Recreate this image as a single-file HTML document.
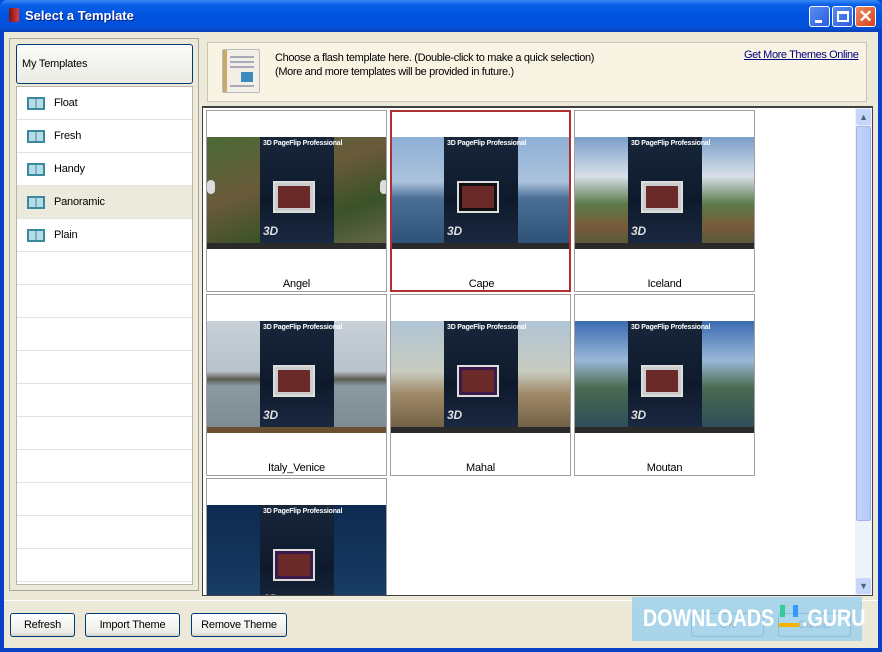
<!DOCTYPE html>
<html><head><meta charset="utf-8"><style>
*{box-sizing:border-box;margin:0;padding:0}
body{width:882px;height:652px;overflow:hidden;font-family:Tahoma,"Liberation Sans",sans-serif;font-size:11px;letter-spacing:-0.2px;color:#000;background:#0a46d8;position:relative}
.abs{position:absolute}
#title{left:0;top:0;width:882px;height:32px;background:linear-gradient(#3a8cf6 0,#0a5fe6 15%,#0053e1 50%,#0450d8 85%,#0a3fb8 100%);border-radius:7px 7px 0 0}
#title .t{left:25px;top:8px;color:#fff;font-weight:bold;font-size:13px;letter-spacing:0;text-shadow:1px 1px #0a1e80}
.tb{top:6px;width:21px;height:21px;border:1px solid #fff;border-radius:3px;background:linear-gradient(135deg,#5a8cf0,#2a5ee0)}
#body{left:4px;top:32px;width:874px;height:616px;background:#ece9d8}
.btn{height:24px;border:1px solid #003c74;border-radius:3px;background:linear-gradient(#fff,#ecebe6 85%,#d6d0c5);text-align:center;line-height:22px;font-size:11px}
.row{left:17px;width:175px;height:33px;border-bottom:1px solid #e4e2da}
.row .ic{position:absolute;left:10px;top:10px;width:18px;height:13px;border:2px solid #3a8a9e;background:linear-gradient(90deg,#b7dce8 45%,#3a8a9e 45%,#3a8a9e 55%,#b7dce8 55%)}
.row span{position:absolute;left:37px;top:10px}
.cell{width:181px;height:182px;border:1px solid #a0a0a0;background:#fff;overflow:hidden}
.cell .img{position:absolute;left:0;top:26px;width:179px;height:112px}
.cell .cv{position:absolute;left:53px;top:26px;width:74px;height:106px;background:linear-gradient(#18263a,#0e1a2c 60%,#1a2840)}
.cv b{position:absolute;left:3px;top:3px;color:#fff;font-size:7px;font-weight:bold;white-space:nowrap}
.cv i{position:absolute;left:13px;top:44px;width:42px;height:32px;background:#ccc;border:2px solid #ddd}
.cv i:after{content:"";position:absolute;left:3px;top:3px;width:32px;height:22px;background:#6a2a2a}
.cv u{position:absolute;left:3px;bottom:5px;color:#ddd;font-size:12px;font-weight:bold;text-decoration:none;font-style:italic}
.cell .bar{position:absolute;left:0;top:132px;width:179px;height:6px;background:#2a2a2a}
.cell .lb{position:absolute;left:0;width:179px;top:167px;text-align:center;font-size:11px}
.cell .nav{position:absolute;top:69px;width:8px;height:14px;background:#ddd;border-radius:7px}
.wm{color:#fff;font-size:24px;font-weight:bold;font-family:'Liberation Sans',sans-serif;letter-spacing:0;transform-origin:0 0;transform:scaleX(0.82)}
</style></head><body>
<div class="abs" id="title">
 <div class="abs" style="left:9px;top:8px;width:10px;height:14px;background:linear-gradient(90deg,#7a1010,#e04040);border-radius:2px"></div>
 <div class="abs t">Select a Template</div>
 <div class="abs tb" style="left:809px"><div class="abs" style="left:5px;top:13px;width:7px;height:3px;background:#fff"></div></div>
 <div class="abs tb" style="left:832px"><div class="abs" style="left:4px;top:4px;width:12px;height:11px;border:2px solid #fff;border-top-width:3px"></div></div>
 <div class="abs tb" style="left:855px;background:linear-gradient(135deg,#f08a60,#d6401a);color:#fff;font-size:17px;text-align:center;line-height:19px;font-weight:bold">✕</div>
</div>
<div class="abs" style="left:0;top:32px;width:882px;height:620px;background:#0841c8"></div>
<div class="abs" id="body"></div>

<div class="abs" style="left:9px;top:38px;width:190px;height:553px;border:1px solid #a8a59a;background:#ece9d8"></div>
<div class="abs btn" style="left:16px;top:44px;width:177px;height:40px;line-height:38px;text-align:left;padding-left:5px;background:linear-gradient(#fbfbf8,#ecebe4)">My Templates</div>
<div class="abs" style="left:16px;top:86px;width:177px;height:499px;background:#fff;border:1px solid #b8b4a8"></div>
<div class="abs row" style="top:87px"><div class="ic"></div><span>Float</span></div>
<div class="abs row" style="top:120px"><div class="ic"></div><span>Fresh</span></div>
<div class="abs row" style="top:153px"><div class="ic"></div><span>Handy</span></div>
<div class="abs row" style="top:186px;background:#ece9dd"><div class="ic"></div><span>Panoramic</span></div>
<div class="abs row" style="top:219px"><div class="ic"></div><span>Plain</span></div>
<div class="abs row" style="top:252px"></div><div class="abs row" style="top:285px"></div><div class="abs row" style="top:318px"></div><div class="abs row" style="top:351px"></div><div class="abs row" style="top:384px"></div><div class="abs row" style="top:417px"></div><div class="abs row" style="top:450px"></div><div class="abs row" style="top:483px"></div><div class="abs row" style="top:516px"></div><div class="abs row" style="top:549px"></div>

<div class="abs" style="left:207px;top:42px;width:660px;height:60px;background:#f8f3e3;border:1px solid #c8c4b8"></div>
<div class="abs" style="left:222px;top:49px;width:38px;height:44px;background:linear-gradient(90deg,#c9a86a 0,#c9a86a 4px,#f2efe6 4px);border:1px solid #bbb;border-radius:2px">
 <div class="abs" style="left:18px;top:22px;width:12px;height:10px;background:#3a8ac0"></div>
 <div class="abs" style="left:7px;top:6px;width:24px;height:2px;background:#aab"></div><div class="abs" style="left:7px;top:11px;width:24px;height:2px;background:#aab"></div><div class="abs" style="left:7px;top:16px;width:24px;height:2px;background:#aab"></div><div class="abs" style="left:7px;top:35px;width:24px;height:2px;background:#aab"></div>
</div>
<div class="abs" style="left:275px;top:51px;line-height:14px;letter-spacing:-0.35px">Choose a flash template here. (Double-click to make a quick selection)<br>(More and more templates will be provided in future.)</div>
<div class="abs" style="left:744px;top:49px;color:#000080;text-decoration:underline;letter-spacing:-0.4px">Get More Themes Online</div>

<div class="abs" style="left:202px;top:106px;width:671px;height:490px;background:#fff;border:1px solid #404040;border-top:2px solid #404040;overflow:hidden">
 <div class="abs" style="left:652px;top:0;width:17px;height:487px;background:#eef2fb">
  <div class="abs" style="left:1px;top:1px;width:15px;height:16px;background:#c6d6fb;border-radius:2px;color:#4d6185;font-size:9px;text-align:center;line-height:16px">▲</div>
  <div class="abs" style="left:1px;top:18px;width:15px;height:395px;background:linear-gradient(90deg,#c4d5fc,#b4c9fa);border:1px solid #9fb6ea;border-radius:2px"></div>
  <div class="abs" style="left:1px;top:470px;width:15px;height:16px;background:#c6d6fb;border-radius:2px;color:#4d6185;font-size:9px;text-align:center;line-height:16px">▼</div>
 </div>
</div>

<div class="abs cell" style="left:206px;top:110px"><div class="img" style="background:linear-gradient(160deg,#4a6a38,#6a5a3a 40%,#3a5228 70%,#6a6a4a)"></div><div class="cv"><b>3D PageFlip Professional</b><i></i><u>3D</u></div><div class="bar"></div><div class="nav" style="left:0"></div><div class="nav" style="left:173px"></div><div class="lb">Angel</div></div>
<div class="abs cell" style="left:390px;top:110px;border:2px solid #b03030"><div class="img" style="left:-1px;top:25px;background:linear-gradient(#8eb0d6,#aac2dc 40%,#4a6e94 55%,#2a4e74)"></div><div class="cv" style="left:52px;top:25px"><b>3D PageFlip Professional</b><i style="background:#111"></i><u>3D</u></div><div class="bar" style="top:131px"></div><div class="lb" style="top:166px">Cape</div></div>
<div class="abs cell" style="left:574px;top:110px"><div class="img" style="background:linear-gradient(#7a9ec8,#d8e0ea 35%,#5a7a48 60%,#7a5a3a 80%,#4a5a3a)"></div><div class="cv"><b>3D PageFlip Professional</b><i></i><u>3D</u></div><div class="bar"></div><div class="lb">Iceland</div></div>

<div class="abs cell" style="left:206px;top:294px"><div class="img" style="background:linear-gradient(#c8d0d8,#b8c2ca 45%,#5a5a50 52%,#8a9aa0 58%,#7a8a90)"></div><div class="cv"><b>3D PageFlip Professional</b><i></i><u>3D</u></div><div class="bar" style="background:#6a5030"></div><div class="lb">Italy_Venice</div></div>
<div class="abs cell" style="left:390px;top:294px"><div class="img" style="background:linear-gradient(#b0c4d4,#c8ccc0 45%,#a08a68 65%,#6a5a40)"></div><div class="cv"><b>3D PageFlip Professional</b><i style="background:#3a1a4a"></i><u>3D</u></div><div class="bar"></div><div class="lb">Mahal</div></div>
<div class="abs cell" style="left:574px;top:294px"><div class="img" style="background:linear-gradient(#3a6ab0,#9ab8d8 35%,#4a6a50 60%,#2a4a5a)"></div><div class="cv"><b>3D PageFlip Professional</b><i></i><u>3D</u></div><div class="bar"></div><div class="lb">Moutan</div></div>

<div class="abs cell" style="left:206px;top:478px;height:117px;border-bottom:none"><div class="img" style="background:linear-gradient(#0e2a50,#1a4068)"></div><div class="cv"><b>3D PageFlip Professional</b><i style="background:#3a1a4a"></i><u>3D</u></div></div>

<div class="abs" style="left:4px;top:600px;width:874px;height:1px;background:#fff"></div>
<div class="abs btn" style="left:10px;top:613px;width:65px">Refresh</div>
<div class="abs btn" style="left:85px;top:613px;width:95px">Import Theme</div>
<div class="abs btn" style="left:191px;top:613px;width:96px">Remove Theme</div>
<div class="abs btn" style="left:691px;top:613px;width:73px">OK</div>
<div class="abs btn" style="left:778px;top:613px;width:73px">Cancel</div>
<div class="abs" style="left:632px;top:597px;width:230px;height:44px;background:rgba(160,210,235,0.88)"></div>
<div class="abs wm" style="left:643px;top:605px">DOWNLOADS</div>
<div class="abs" style="left:780px;top:605px;width:18px;height:12px;border-left:5px solid #3c9;border-right:5px solid #39f"></div>
<div class="abs" style="left:779px;top:623px;width:20px;height:4px;background:#f5b400"></div>
<div class="abs wm" style="left:802px;top:605px">.GURU</div>
</body></html>
